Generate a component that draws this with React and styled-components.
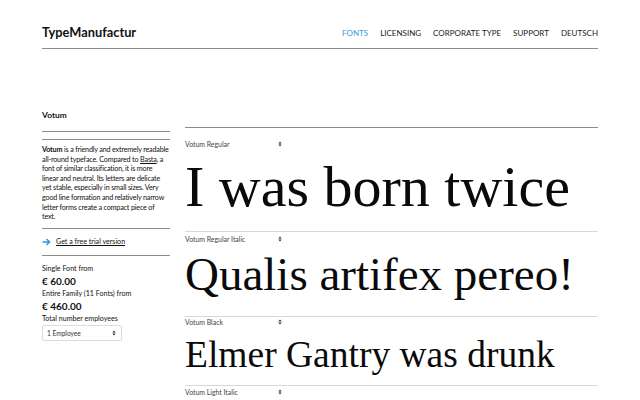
import React from 'react';
import styled, { createGlobalStyle } from 'styled-components';

const GlobalStyle = createGlobalStyle`
    html, body {
        margin: 0;
        padding: 0;
        background: #fff;
    }
    body {
        font-family: Lato, 'Noto Sans', sans-serif;
        color: #111;
        overflow: hidden;
    }
`;

const Page = styled.div`
    width: 640px;
    height: 400px;
    padding: 0 42px;
    box-sizing: border-box;
    overflow: hidden;
`;

const Header = styled.header`
    display: flex;
    align-items: flex-end;
    justify-content: space-between;
    height: 49px;
    padding-bottom: 8px;
    border-bottom: 1px solid #8a8a8a;
    box-sizing: border-box;
`;

const Logo = styled.div`
    font-size: 12.8px;
    font-weight: 700;
    line-height: 16px;
`;

const Nav = styled.nav`
    display: flex;
    gap: 12px;
    padding-bottom: 2px;
`;

const NavItem = styled.a`
    font-size: 8px;
    text-transform: uppercase;
    color: ${p => (p.$active ? '#3a9ad9' : '#1a1a1a')};
    text-decoration: none;
`;

const Body = styled.div`
    display: flex;
    gap: 15px;
    padding-top: 59px;
`;

const Sidebar = styled.aside`
    width: 128px;
    flex-shrink: 0;
`;

const Title = styled.div`
    font-size: 8.4px;
    font-weight: 700;
    border-bottom: 1px solid #8a8a8a;
    padding-top: 2px;
    box-sizing: border-box;
    height: 24px;
`;

const Divider = styled.div`
    height: 8px;
    border-bottom: 1px solid #8a8a8a;
    box-sizing: border-box;
`;

const Description = styled.p`
    margin: 0;
    padding: 5px 0 6px;
    font-size: 7.2px;
    line-height: 9.6px;
    letter-spacing: -0.18px;
    border-bottom: 1px solid #8a8a8a;

    b {
        font-weight: 700;
    }
    u {
        text-underline-offset: 1px;
    }
`;

const TrialRow = styled.div`
    display: flex;
    align-items: center;
    gap: 5px;
    height: 26px;
    border-bottom: 1px solid #8a8a8a;
    font-size: 7.1px;

    a {
        color: #111;
        text-decoration: underline;
        text-underline-offset: 1px;
    }
`;

const Pricing = styled.div`
    padding-top: 8px;
`;

const PriceLabel = styled.div`
    font-size: 7.1px;
    line-height: 10px;
`;

const Price = styled.div`
    font-size: 10px;
    font-weight: 700;
    line-height: 14px;
    margin-bottom: 1px;
`;

const Select = styled.div`
    display: flex;
    align-items: center;
    justify-content: space-between;
    width: 80px;
    height: 16px;
    box-sizing: border-box;
    padding: 0 5px 0 4px;
    margin-top: 1px;
    border: 1px solid #dcdcdc;
    border-radius: 2px;
    font-size: 6.6px;
    color: #333;
`;

const Main = styled.main`
    flex: 1;
    margin-top: 19px;
    border-top: 1px solid #8a8a8a;
`;

const Sample = styled.section`
    border-bottom: 1px solid #d8d8d8;
    padding-top: ${p => p.$pt}px;
    height: ${p => p.$h}px;
    box-sizing: border-box;
`;

const StyleRow = styled.div`
    display: flex;
    align-items: center;
    font-size: 6.9px;
    color: #444;
    height: 9px;
`;

const StyleName = styled.span`
    width: 93px;
`;

const Specimen = styled.div`
    font-family: 'Liberation Serif', 'Times New Roman', serif;
    font-size: ${p => p.$size}px;
    line-height: 1;
    margin-top: ${p => p.$mt}px;
    white-space: nowrap;
    color: #0a0a0a;
`;

const Updown = () => (
    <svg width="4" height="6" viewBox="0 0 4 6">
        <path d="M0.3 2.4 L2 0.6 L3.7 2.4 Z M0.3 3.6 L2 5.4 L3.7 3.6 Z" fill="#333" />
    </svg>
);

const Arrow = () => (
    <svg width="9" height="8" viewBox="0 0 9 8">
        <path d="M0.5 4 H7.5 M4.5 1 L7.7 4 L4.5 7" stroke="#2b95d6" strokeWidth="1.3" fill="none" />
    </svg>
);

const samples = [
    { name: 'Votum Regular', text: 'I was born twice', size: 58, pt: 11, mt: 10, h: 104 },
    { name: 'Votum Regular Italic', text: 'Qualis artifex pereo!', size: 47, pt: 2, mt: 8, h: 85 },
    { name: 'Votum Black', text: 'Elmer Gantry was drunk', size: 37.5, pt: 0, mt: 10, h: 69 },
    { name: 'Votum Light Italic', text: '', size: 40, pt: 1, mt: 12, h: 60 }
];

const App = () => (
    <Page>
        <GlobalStyle />
        <Header>
            <Logo>TypeManufactur</Logo>
            <Nav>
                <NavItem $active>Fonts</NavItem>
                <NavItem>Licensing</NavItem>
                <NavItem>Corporate Type</NavItem>
                <NavItem>Support</NavItem>
                <NavItem>Deutsch</NavItem>
            </Nav>
        </Header>
        <Body>
            <Sidebar>
                <Title>Votum</Title>
                <Divider />
                <Description>
                    <b>Votum</b> is a friendly and extremely readable all-round typeface. Compared to{' '}
                    <u>Basta</u>, a font of similar classification, it is more linear and neutral. Its letters are
                    delicate yet stable, especially in small sizes. Very good line formation and relatively narrow
                    letter forms create a compact piece of
                    <br />
                    text.
                </Description>
                <TrialRow>
                    <Arrow />
                    <a>Get a free trial version</a>
                </TrialRow>
                <Pricing>
                    <PriceLabel>Single Font from</PriceLabel>
                    <Price>€ 60.00</Price>
                    <PriceLabel>Entire Family (11 Fonts) from</PriceLabel>
                    <Price>€ 460.00</Price>
                    <PriceLabel>Total number employees</PriceLabel>
                    <Select>
                        <span>1 Employee</span>
                        <Updown />
                    </Select>
                </Pricing>
            </Sidebar>
            <Main>
                {samples.map(s => (
                    <Sample key={s.name} $pt={s.pt} $h={s.h}>
                        <StyleRow>
                            <StyleName>{s.name}</StyleName>
                            <Updown />
                        </StyleRow>
                        {s.text && (
                            <Specimen $size={s.size} $mt={s.mt}>
                                {s.text}
                            </Specimen>
                        )}
                    </Sample>
                ))}
            </Main>
        </Body>
    </Page>
);

export default App;
